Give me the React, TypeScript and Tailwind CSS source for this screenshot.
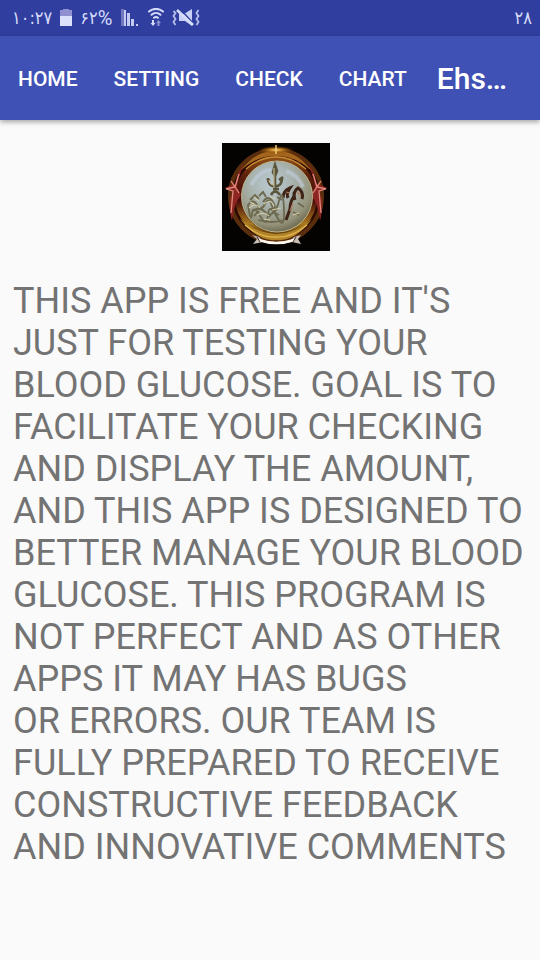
const NAV_ITEMS = ["HOME", "SETTING", "CHECK", "CHART"];

function BatteryIcon() {
  return (
    <svg className="h-5 w-3" viewBox="0 0 12 20" aria-hidden="true">
      <path d="M3 1h6v1h3v6H0V2h3z" fill="#9190d1" />
      <path d="M0 8h12v10H0z" fill="#dce1fb" />
    </svg>
  );
}

function SignalIcon() {
  return (
    <svg className="h-5 w-5" viewBox="0 0 20 20" aria-hidden="true">
      <path d="M1 1h3v17H1z" fill="#7079bf" />
      <path d="M4 2h2v16H4zM7 5h3v13H7zM11 11h3v7h-3zM16 16h2v2h-2z" fill="#c3cbf1" />
    </svg>
  );
}

function WifiIcon() {
  return (
    <svg className="h-5 w-4" viewBox="0 0 16 20" fill="none" aria-hidden="true">
      <g stroke="#d5dbfa" strokeWidth="2" strokeLinecap="round">
        <path d="M1 3.500c4-3.500 10-3.500 14 0" />
        <path d="M3.500 6.800c2.600-2.300 6.400-2.300 9 0" />
        <path d="M6 9.800c1.300-1 2.700-1 4 0" />
      </g>
      <path d="M4 12h2v3h1.500L5 18l-2.500-3H4z" fill="#d5dbfa" />
      <path d="M9.500 18h2v-3H13l-2.500-3L8 15h1.500z" fill="#8b93d0" />
    </svg>
  );
}

function MuteIcon() {
  return (
    <svg className="h-5 w-7" viewBox="0 0 28 20" fill="none" aria-hidden="true">
      <path
        d="M1.500 3l2 2-2 3 2 3-2 3 2 3M26.500 2l-2 3 2 3-2 3 2 3-2 3"
        stroke="#b5bdeb"
        strokeWidth="1.800"
      />
      <path d="M7 6h5l8-5v17l-7-5H7z" fill="#c8d0f6" />
      <path d="M8 1l14 15" stroke="#303f9f" strokeWidth="1.500" />
      <path d="M5 2l16 15" stroke="#d5dbfa" strokeWidth="2.500" />
    </svg>
  );
}

function Emblem() {
  return (
    <svg className="size-27" viewBox="0 0 108 108" role="img" aria-label="Ehsan emblem">
      <defs>
        <radialGradient id="orb" cx="42%" cy="32%" r="72%">
          <stop offset="0" stopColor="#bccbd3" />
          <stop offset="0.400" stopColor="#a9b4b0" />
          <stop offset="0.800" stopColor="#949279" />
          <stop offset="1" stopColor="#626047" />
        </radialGradient>
        <linearGradient id="gold" x1="0" y1="0" x2="0" y2="1">
          <stop offset="0" stopColor="#8a4c14" />
          <stop offset="0.220" stopColor="#5c210a" />
          <stop offset="0.550" stopColor="#480b08" />
          <stop offset="0.850" stopColor="#a87a20" />
          <stop offset="1" stopColor="#5a3808" />
        </linearGradient>
        <radialGradient id="spark">
          <stop offset="0" stopColor="#f7d98c" />
          <stop offset="0.350" stopColor="#b97a1c" />
          <stop offset="1" stopColor="#7d400a" stopOpacity="0" />
        </radialGradient>
        <filter id="soft" x="-10%" y="-10%" width="120%" height="120%">
          <feGaussianBlur stdDeviation="0.5" />
        </filter>
      </defs>
      <rect width="108" height="108" fill="#050202" />
      <g filter="url(#soft)">
        <circle cx="54" cy="53" r="46" fill="#2b0806" stroke="#5a2f0c" strokeWidth="4" />
        <circle cx="54" cy="54" r="38" fill="none" stroke="url(#gold)" strokeWidth="6" />
        <path d="M18 28Q34 7 54 8Q74 7 90 28Q72 12 54 13Q36 12 18 28z" fill="#a4651d" />
        <path d="M24 26Q38 14 54 14Q70 14 84 26" fill="none" stroke="#c58a35" strokeWidth="1.300" />
        <path d="M18 76Q36 99 54 97Q73 99 90 76Q75 90 54 91Q34 90 18 76z" fill="#b38429" />
        <path d="M23 82Q38 95 54 94Q70 95 85 82" fill="none" stroke="#e0b650" strokeWidth="1.300" />
        <ellipse cx="54" cy="7" rx="18" ry="4" fill="url(#spark)" />
        <path d="M54 2v9" stroke="#f1cb74" strokeWidth="1.500" />
        <path d="M22 20Q13 34 14 40L3 45l8 4Q5 57 10 78Q12 60 19 52L15 44Q16 35 22 20z" fill="#8d2721" />
        <path d="M86 20Q95 34 94 40l11 5-8 4q6 8 1 29Q96 60 89 52l4-8Q92 35 86 20z" fill="#8d2721" />
        <path d="M17 31l-4 13-9 2 7 2-2 22M91 31l4 13 9 2-7 2 2 22M9 38l8 12M99 38l-8 12" fill="none" stroke="#df8a80" strokeWidth="1.300" />
        <circle cx="55" cy="53.500" r="35.500" fill="url(#orb)" stroke="#c1b78c" strokeWidth="1" />
        <path d="M29 42q9-15 20-15M64 28q12 4 17 16" stroke="#c2cddd" strokeWidth="4" fill="none" opacity="0.600" />
        <path d="M53 22v24M46 35q0 9 7 8q7 1 7-9M53 22l-2 7 2 4 2-5zM45 36l3 2M61 34l-4 3M51 46h6M49 52q4-7 9 0" fill="none" stroke="#5b553c" strokeWidth="2.600" />
        <path d="M52 25v20M47 37q1 5 5 5" stroke="#d0c49b" strokeWidth="1" fill="none" />
        <path d="M61 55q0-7 7-10q-4 6-2 10M73 57q-3-8 3-12q6 4 4 11M72 53q-4 6-4 13l-4 11" fill="none" stroke="#3d2018" strokeWidth="3" />
        <path d="M64 49l4 1M75 49l4 4M71 60l-3 8" stroke="#b67d60" strokeWidth="1.200" />
        <g fill="none" stroke="#6c6950" strokeWidth="1.800">
          <path d="M26 62q5-7 9 0t8-1 7 2 7-5 5 8-7 8-9-2-8 1-8-2-4-9z" />
          <path d="M31 68q7-5 12 1t12-3M41 59q5-8 10 0t-3 7M28 57l5-5 4 4M37 53l4-4 3 5M47 74l4-5 6 3M32 73l5-5M55 54l5 3M71 69l6 3M76 60l6 4M36 77q14 4 26 0" />
        </g>
        <g fill="none" stroke="#d4cda8" strokeWidth="1.100">
          <path d="M27 65q7-6 11 0M42 61q7-6 10 2M35 72q8-4 12 1M50 67l9-2M48 54l6 2M71 72l6-2M32 54l5 4M42 76l6 1M28 59l4 2" />
        </g>
        <path d="M30 92l7 2 3 3q14 4 29 0l3-3 7-2-3 4 3 5-9-2q-15 4-29 0l-10 2 4-5z" fill="#c8beb6" />
        <path d="M37 97q17 6 35 0" stroke="#fff6ee" strokeWidth="2.500" fill="none" />
        <path d="M35 94l3 5M74 94l-3 5" stroke="#3e2d25" strokeWidth="1" />
      </g>
    </svg>
  );
}

export default function App() {
  return (
    <div className="min-h-screen bg-[#fafafa] font-[Roboto,'Noto_Sans',sans-serif]">
      <div className="flex h-9 items-center justify-between bg-[#303f9f] pr-2 pl-3 font-['DejaVu_Sans_Condensed','DejaVu_Sans',sans-serif] text-lg leading-6 text-[#d5dbfa]">
        <div className="flex items-center gap-2">
          <time>۱۰:۲۷</time>
          <BatteryIcon />
          <span className="flex items-center">
            ۶۲<span className="font-[Roboto,sans-serif] text-xl leading-6">%</span>
          </span>
          <SignalIcon />
          <WifiIcon />
          <MuteIcon />
        </div>
        <span>۲۸</span>
      </div>

      <header className="flex h-21 items-center bg-[#3f51b5] pt-px text-white shadow-[0_2px_5px_rgba(0,0,0,0.35)]">
        <nav className="flex shrink-0">
          {NAV_ITEMS.map((item) => (
            <button key={item} type="button" className="h-20 px-[18px] text-[21px] leading-6 font-medium">
              {item}
            </button>
          ))}
        </nav>
        <h1 className="min-w-0 flex-1 pr-6 pl-3 text-[30px] leading-9 font-medium">Ehs…</h1>
      </header>

      <main className="px-[13px] pt-[23px]">
        <div className="flex justify-center pl-3">
          <Emblem />
        </div>
        <p className="mt-[29px] text-[36px] leading-[42px] text-[#737373]">
          THIS APP IS FREE AND IT'S JUST FOR TESTING YOUR BLOOD GLUCOSE. GOAL IS TO FACILITATE YOUR CHECKING AND
          DISPLAY THE AMOUNT, AND THIS APP IS DESIGNED TO BETTER MANAGE YOUR BLOOD GLUCOSE. THIS PROGRAM IS NOT
          PERFECT AND AS OTHER APPS IT MAY HAS BUGS
          <br />
          OR ERRORS. OUR TEAM IS FULLY PREPARED TO RECEIVE CONSTRUCTIVE FEEDBACK AND INNOVATIVE COMMENTS
        </p>
      </main>
    </div>
  );
}
